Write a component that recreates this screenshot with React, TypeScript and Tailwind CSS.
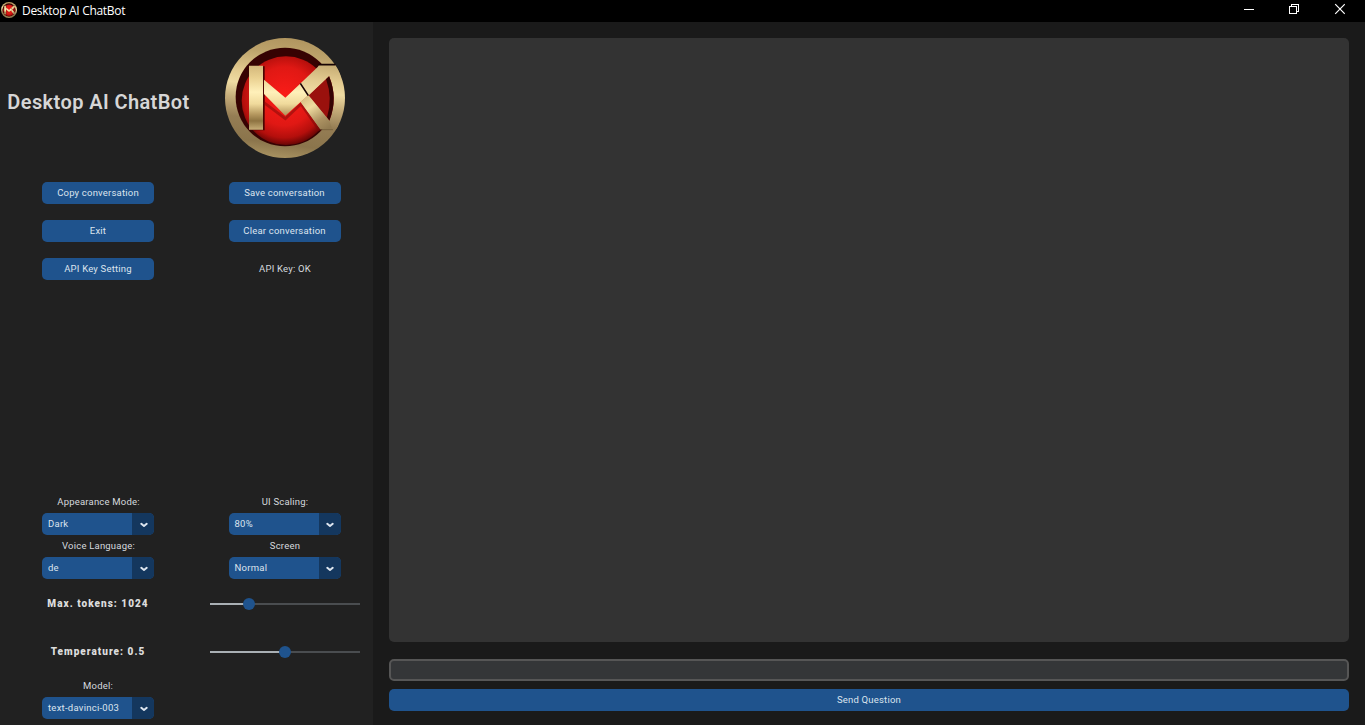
import React from 'react';

const labelText = 'pl-px text-[9.5px] leading-[22px] tracking-[0.2px] whitespace-nowrap text-[#d5d9de]';
const boldLabel = 'mb-px text-[10px] font-black tracking-[1.02px] whitespace-nowrap text-[#dcdcdc]';

function Logo({ id, className }: { id: string; className: string }) {
  const gold = `url(#${id}-gold)`;
  const bar = `url(#${id}-bar)`;
  return (
    <svg className={className} viewBox="30 24 360 360" aria-hidden="true">
      <defs>
        <linearGradient id={`${id}-gold`} gradientUnits="userSpaceOnUse" x1="235" y1="24" x2="190" y2="384">
          <stop offset="0" stopColor="#b0955f" />
          <stop offset="0.14" stopColor="#bda36b" />
          <stop offset="0.32" stopColor="#e3cb90" />
          <stop offset="0.42" stopColor="#efdba2" />
          <stop offset="0.54" stopColor="#c6ad7a" />
          <stop offset="0.7" stopColor="#957d54" />
          <stop offset="0.88" stopColor="#8b754c" />
          <stop offset="1" stopColor="#a89261" />
        </linearGradient>
        <linearGradient id={`${id}-bar`} gradientUnits="userSpaceOnUse" x1="210" y1="104" x2="210" y2="300">
          <stop offset="0" stopColor="#d2b67a" />
          <stop offset="0.2" stopColor="#e9d090" />
          <stop offset="0.42" stopColor="#fff0ba" />
          <stop offset="0.6" stopColor="#f0da9c" />
          <stop offset="0.76" stopColor="#b5985f" />
          <stop offset="0.86" stopColor="#8e7341" />
          <stop offset="1" stopColor="#c9b079" />
        </linearGradient>
        <linearGradient id={`${id}-lower`} gradientUnits="userSpaceOnUse" x1="272" y1="200" x2="335" y2="298">
          <stop offset="0" stopColor="#d9c084" />
          <stop offset="0.3" stopColor="#f0dca0" />
          <stop offset="0.7" stopColor="#ac9262" />
          <stop offset="1" stopColor="#927b51" />
        </linearGradient>
        <radialGradient id={`${id}-red`} cx="0.48" cy="0.45" r="0.55">
          <stop offset="0" stopColor="#fb1c18" />
          <stop offset="0.6" stopColor="#e01814" />
          <stop offset="0.85" stopColor="#b40f0c" />
          <stop offset="1" stopColor="#6a0605" />
        </radialGradient>
      </defs>
      <circle cx="210" cy="204" r="180" fill={gold} />
      <circle cx="210" cy="201" r="148" fill="#360202" />
      <circle cx="213" cy="212" r="133" fill={`url(#${id}-red)`} />
      <path d="M107 109h42v192h-42z" fill="#4a0503" />
      <path d="M147 218l64 48 47-44 56 80" fill="none" stroke="#7a0907" strokeWidth="8" opacity="0.5" />
      <path d="M312 104H372L384 204 368 298H316L257 216 280 194z" fill={gold} clipPath={`url(#${id}-disc)`} />
      <clipPath id={`${id}-disc`}>
        <circle cx="210" cy="204" r="180" />
      </clipPath>
      <path d="M280 197L342 138Q370 205 343 272z" fill="#9a110d" />
      <path d="M333 147L342 138Q370 205 343 272L336 262Q354 205 333 147z" fill="#350303" />
      <path d="M102 107h42v192h-42z" fill={bar} />
      <path d="M147 149l64 54 46-43 23 35-69 62-64-65z" fill={bar} />
      <path d="M257 160L312 107H360L342 138 280 195z" fill={gold} />
      <path d="M280 195l-23 21 59 82h36l-9-26z" fill={`url(#${id}-lower)`} />
      <path d="M310 104h52M256 160l24 37" stroke="#170504" strokeWidth="5" fill="none" />
      <path d="M316 299h38" stroke="#6d5835" strokeWidth="2" fill="none" />
    </svg>
  );
}

function Button({ children, className = 'w-28' }: { children: React.ReactNode; className?: string }) {
  return (
    <button className={`h-[22px] rounded-[5px] bg-[#1f538d] text-center text-[9.5px] leading-[22px] tracking-[0.2px] whitespace-nowrap text-[#dce4ee] ${className}`}>
      {children}
    </button>
  );
}

function Select({ value }: { value: string }) {
  return (
    <button className="flex h-[22px] w-28 overflow-hidden rounded-[5px] bg-[#1f538d] text-left">
      <span className="w-[90px] pl-[6px] text-[9.5px] leading-[22px] tracking-[0.25px] whitespace-nowrap text-[#dce4ee]">{value}</span>
      <span className="flex h-full w-[22px] items-center justify-center bg-[#14375e]">
        <svg className="mt-px ml-px h-[6px] w-2" viewBox="0 0 8 6" fill="none" stroke="#dce4ee" strokeWidth="2" strokeLinecap="round" strokeLinejoin="round">
          <path d="M1.3 1.8L4 4l2.700-2.200" />
        </svg>
      </span>
    </button>
  );
}

function Slider({ percent }: { percent: number }) {
  return (
    <div className="relative h-3 w-[150px]">
      <div className="mt-[5px] flex h-[2px] bg-[#4a4d50]">
        <div className="bg-[#aab0b5]" style={{ width: `${percent}%` }} />
      </div>
      <div className="absolute top-0 size-3 -translate-x-1/2 rounded-full bg-[#1f538d]" style={{ left: `${percent}%` }} />
    </div>
  );
}

export default function App() {
  return (
    <div className="flex h-[725px] w-[1365px] flex-col overflow-hidden bg-[#1a1a1a] font-['Roboto',sans-serif]">
      <header className="flex h-[22px] shrink-0 items-center bg-black text-white">
        <Logo id="small" className="-mt-[2px] ml-px size-4 shrink-0" />
        <span className="ml-[5px] font-['Open_Sans','Noto_Sans',sans-serif] text-[12px] leading-[22px] tracking-[-0.3px]">Desktop AI ChatBot</span>
        <div className="ml-auto flex h-[22px] pr-[20px]">
          <svg className="mr-[34px] h-[22px] w-[11px]" viewBox="0 0 11 22" shapeRendering="crispEdges">
            <path d="M1 9h10v1H1z" fill="white" />
          </svg>
          <svg className="mr-[35px] h-[22px] w-[11px]" viewBox="0 0 11 22" fill="none" stroke="white" shapeRendering="crispEdges">
            <path d="M1.500 6.500h7v7h-7zM3.500 6V4.500h7v7H9" />
          </svg>
          <svg className="h-[22px] w-[11px]" viewBox="0 0 11 22" fill="none" stroke="white" strokeWidth="1.2">
            <path d="M1.200 4.200l9.600 9.600M10.800 4.200L1.200 13.800" />
          </svg>
        </div>
      </header>

      <div className="flex min-h-0 flex-1">
        <aside className="flex w-[373px] shrink-0 flex-col bg-[#212121] pt-4 pb-[6px]">
          <div className="grid h-[120px] grid-cols-[196px_177px] items-center justify-items-center">
            <h1 className="mt-[7px] ml-px text-[20px] font-semibold tracking-[0.4px] whitespace-nowrap text-[#d6d6d6]">Desktop AI ChatBot</h1>
            <Logo id="large" className="size-[120px]" />
          </div>

          <div className="mt-6 grid grid-cols-[196px_177px] justify-items-center gap-y-4">
            <Button>Copy conversation</Button>
            <Button>Save conversation</Button>
            <Button>Exit</Button>
            <Button>Clear conversation</Button>
            <Button>API Key Setting</Button>
            <span className={labelText}>API Key: OK</span>
          </div>

          <div className="mt-auto grid grid-cols-[196px_177px] justify-items-center">
            <span className={labelText}>Appearance Mode:</span>
            <span className={labelText}>UI Scaling:</span>
            <Select value="Dark" />
            <Select value="80%" />
            <span className={labelText}>Voice Language:</span>
            <span className={labelText}>Screen</span>
            <Select value="de" />
            <Select value="Normal" />
          </div>
          <div className="mt-px grid grid-cols-[196px_177px] grid-rows-[48px_48px] items-center justify-items-center">
            <span className={boldLabel}>Max. tokens: 1024</span>
            <Slider percent={26} />
            <span className={boldLabel}>Temperature: 0.5</span>
            <Slider percent={50} />
          </div>
          <div className="flex w-[196px] flex-col items-center">
            <span className="text-[9.5px] leading-[20px] tracking-[0.2px] text-[#d5d9de]">Model:</span>
            <div className="mt-px flex">
              <Select value="text-davinci-003" />
            </div>
          </div>
        </aside>

        <main className="flex min-w-0 flex-1 flex-col px-4 pt-4 pb-[14px]">
          <div className="min-h-0 flex-1 rounded-[5px] bg-[#333333]" />
          <input aria-label="Question" className="mt-[17px] h-[22px] w-full shrink-0 rounded-[5px] border-2 border-[#565656] bg-[#343638] outline-none" />
          <Button className="mt-2 w-full shrink-0">Send Question</Button>
        </main>
      </div>
    </div>
  );
}
